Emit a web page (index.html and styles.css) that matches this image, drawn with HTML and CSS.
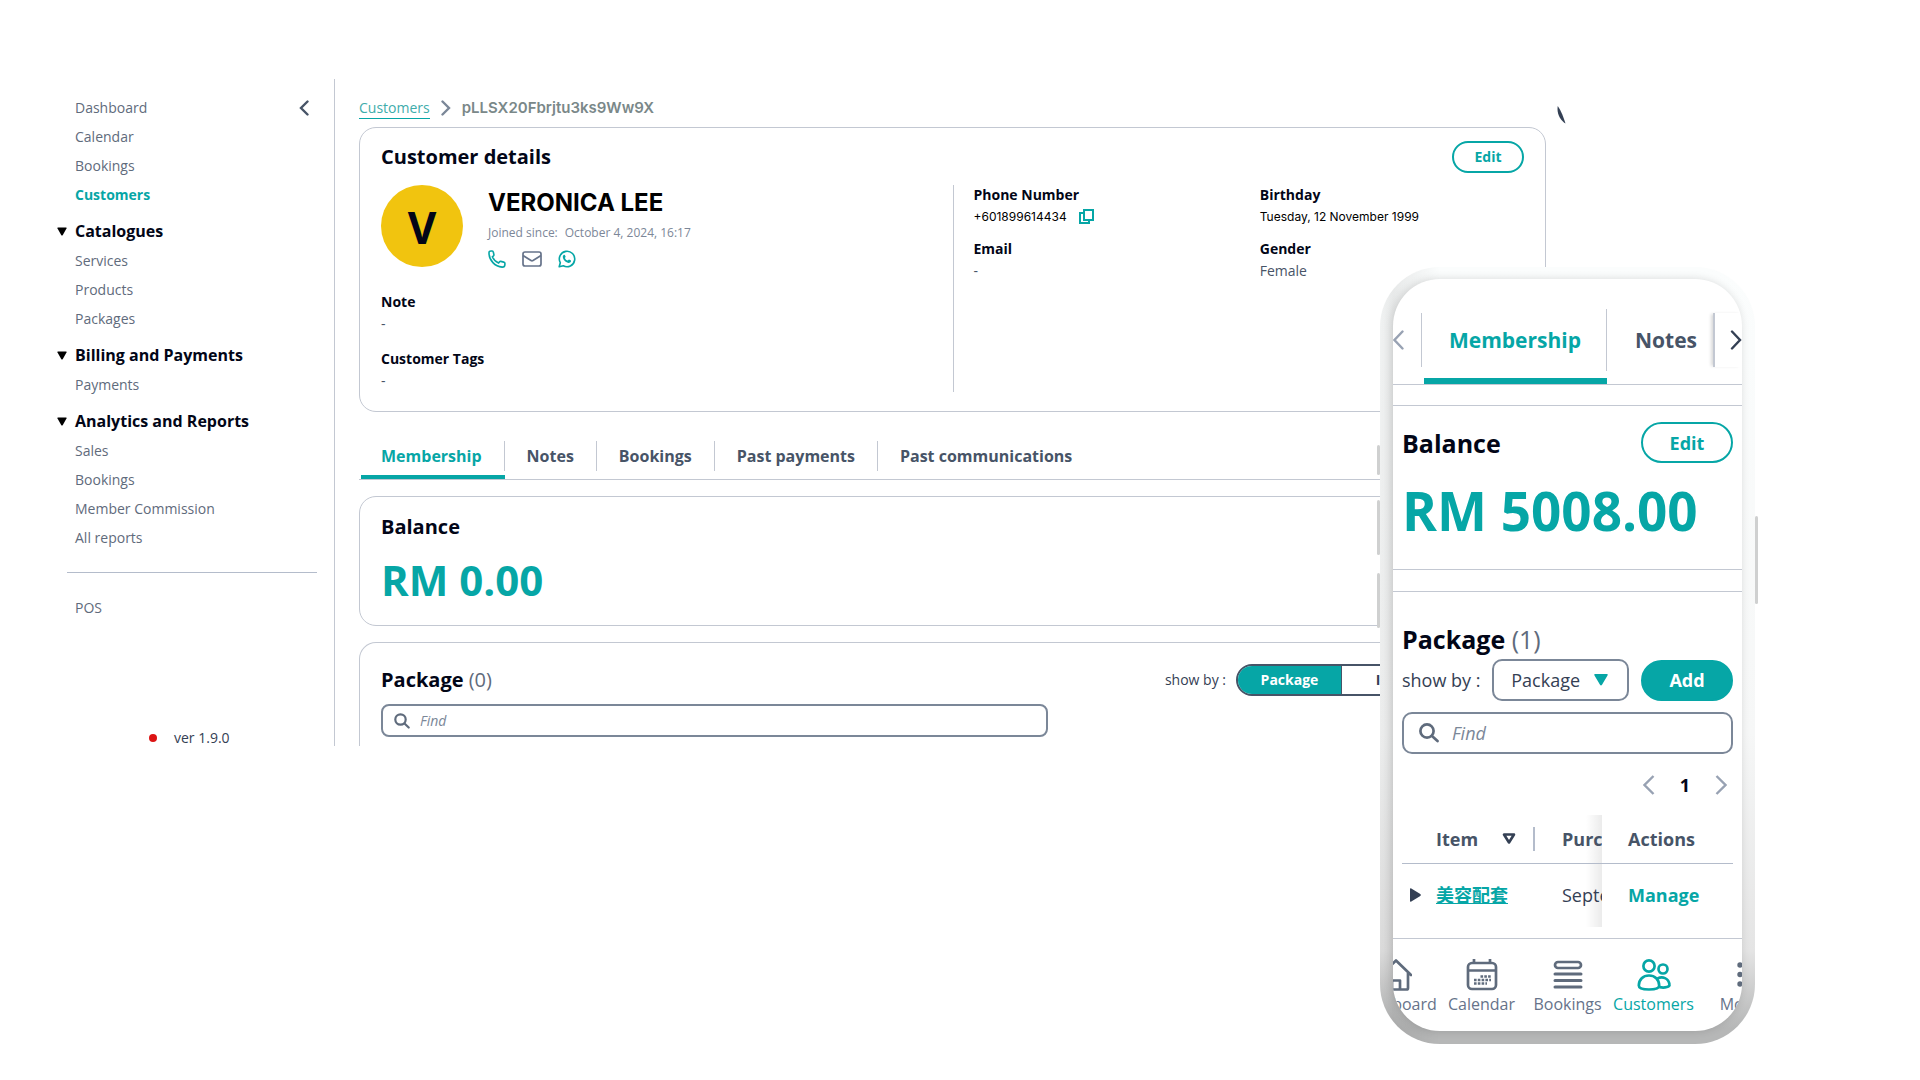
FILE: index.html
```html
<!DOCTYPE html>
<html lang="en">
<head>
<meta charset="utf-8">
<meta name="viewport" content="width=device-width, initial-scale=1">
<title>Customer details</title>
<link rel="stylesheet" href="styles.css">
</head>
<body>
<div class="stage">
  <div class="desktop">
    <aside class="sidebar">
      <nav class="menu" aria-label="Main">
        <div class="menu-top">
          <a href="#">Dashboard</a>
          <button class="icon-btn" type="button" aria-label="Collapse menu">
            <svg width="10" height="16" viewBox="0 0 10 16"><path d="M8.500 1.500 2 8l6.500 6.500" fill="none" stroke="#475467" stroke-width="2.400" stroke-linecap="round"/></svg>
          </button>
        </div>
        <a href="#">Calendar</a>
        <a href="#">Bookings</a>
        <a href="#" class="current">Customers</a>
        <button class="group" type="button"><svg width="10" height="9" viewBox="0 0 10 9"><path d="M1 .5h8q1 0 .5 1L5.800 8q-.8 1-1.600 0L.5 1.500Q0 .5 1 .5z"/></svg>Catalogues</button>
        <a href="#">Services</a>
        <a href="#">Products</a>
        <a href="#">Packages</a>
        <button class="group" type="button"><svg width="10" height="9" viewBox="0 0 10 9"><path d="M1 .5h8q1 0 .5 1L5.800 8q-.8 1-1.600 0L.5 1.500Q0 .5 1 .5z"/></svg>Billing and Payments</button>
        <a href="#">Payments</a>
        <button class="group" type="button"><svg width="10" height="9" viewBox="0 0 10 9"><path d="M1 .5h8q1 0 .5 1L5.800 8q-.8 1-1.600 0L.5 1.500Q0 .5 1 .5z"/></svg>Analytics and Reports</button>
        <a href="#">Sales</a>
        <a href="#">Bookings</a>
        <a href="#">Member Commission</a>
        <a href="#">All reports</a>
        <hr>
        <a href="#">POS</a>
      </nav>
      <p class="version"><span class="dot"></span>ver 1.9.0</p>
    </aside>

    <main class="main">
      <nav class="crumbs" aria-label="Breadcrumb">
        <a href="#">Customers</a>
        <svg width="10" height="16" viewBox="0 0 10 16"><path d="M1.500 1.500 8 8l-6.500 6.500" fill="none" stroke="#7b8798" stroke-width="2.400" stroke-linecap="round"/></svg>
        <span class="crumb-id">pLLSX20Fbrjtu3ks9Ww9X</span>
      </nav>

      <section class="card details">
        <header class="card-head">
          <h1 class="title">Customer details</h1>
          <button class="btn btn-outline" type="button">Edit</button>
        </header>
        <div class="details-grid">
          <div class="profile">
            <div class="person">
              <div class="avatar">V</div>
              <div class="person-text">
                <h2 class="name">VERONICA LEE</h2>
                <p class="joined"><span>Joined since:</span><span>October 4, 2024, 16:17</span></p>
                <div class="contacts">
                  <a href="#" aria-label="Call"><svg width="18" height="18" viewBox="0 0 18 18" fill="none" stroke="#06a6a6" stroke-width="1.600" stroke-linejoin="round"><path d="M1 2.800C1 1.600 1.800 1 3 1h1.200c.6 0 1 .4 1.100 1l.6 2.600c.1.500 0 .9-.4 1.200L4.300 6.800c1.200 2.700 3.500 5 6.300 6.300l1-1.300c.3-.4.8-.5 1.200-.4l3 .7c.7.100 1.100.6 1.100 1.200v1.100c0 1.700-1 2.700-2.700 2.700C7 16.500 1 10.500 1 2.800z"/></svg></a>
                  <a href="#" aria-label="Email"><svg width="20" height="16" viewBox="0 0 20 16" fill="none" stroke="#66738a" stroke-width="1.700"><rect x="1" y="1" width="18" height="14" rx="2"/><path d="m1 4.500 8 5q1 .6 2 0l8-5"/></svg></a>
                  <a href="#" aria-label="WhatsApp"><svg width="18" height="18" viewBox="0 0 18 18"><path d="M1.200 16.800 2.300 12.700A7.700 7.700 0 1 1 5.300 15.700z" fill="none" stroke="#06a6a6" stroke-width="1.600" stroke-linejoin="round"/><path d="M6.500 4.800c-.5-.2-1.700.7-1.700 2 0 3 3.500 6.300 6.200 6.100 1.300-.1 2.200-1.100 2-2.100-.1-.4-1.600-1.100-2-1.200-.5 0-.8 1.100-1.200 1C8.600 10.300 7.200 9 6.900 7.900c-.1-.4.8-.7.700-1.200 0-.3-.6-1.800-1.100-1.900z" fill="#06a6a6"/></svg></a>
                </div>
              </div>
            </div>
            <dl class="facts">
              <div><dt>Note</dt><dd>-</dd></div>
              <div><dt>Customer Tags</dt><dd>-</dd></div>
            </dl>
          </div>
          <dl class="info">
            <div><dt>Phone Number</dt><dd class="typed">+601899614434
              <button class="icon-btn" type="button" aria-label="Copy phone number"><svg width="15" height="15" viewBox="0 0 15 15" fill="none" stroke="#06a6a6" stroke-width="2"><path d="M5 1h9v10H5z"/><path d="M5 4H1v10h9v-3"/></svg></button></dd></div>
            <div><dt>Birthday</dt><dd class="typed">Tuesday, 12 November 1999</dd></div>
            <div><dt>Email</dt><dd>-</dd></div>
            <div><dt>Gender</dt><dd>Female</dd></div>
          </dl>
        </div>
      </section>

      <nav class="tabs" aria-label="Customer sections">
        <a href="#" class="active"><span>Membership</span></a>
        <a href="#"><span>Notes</span></a>
        <a href="#"><span>Bookings</span></a>
        <a href="#"><span>Past payments</span></a>
        <a href="#"><span>Past communications</span></a>
      </nav>

      <section class="card balance">
        <h2 class="title">Balance</h2>
        <p class="amount">RM 0.00</p>
      </section>

      <section class="card package">
        <div class="package-head">
          <h2 class="title">Package <span class="count">(0)</span></h2>
          <div class="show-by">
            <span>show by :</span>
            <div class="segmented">
              <button type="button" class="on">Package</button>
              <button type="button">Item</button>
            </div>
          </div>
        </div>
        <div class="search-row">
          <label class="search">
            <svg width="16" height="16" viewBox="0 0 16 16" fill="none" stroke="#5f6b7c" stroke-width="2.200" stroke-linecap="round"><circle cx="6.500" cy="6.500" r="5.200"/><path d="m10.500 10.500 4.200 4"/></svg>
            <input type="text" placeholder="Find" aria-label="Find a package">
          </label>
        </div>
      </section>
    </main>
    <svg class="sliver" width="9" height="18" viewBox="0 0 9 18"><path d="M.8 0C4 4.500 6.500 11 8.500 17.500 3.500 14-.6 8 .8 0z" fill="#344054"/></svg>
  </div>

  <div class="phone">
    <i class="key key-a"></i><i class="key key-b"></i><i class="key key-c"></i><i class="key key-d"></i>
    <div class="bezel">
      <div class="screen">
        <nav class="m-tabs" aria-label="Mobile sections">
          <button class="icon-btn m-prev" type="button" aria-label="Previous tab"><svg width="12" height="20" viewBox="1 0 12 20"><path d="M10.500 1.500 2.500 10l8 8.500" fill="none" stroke="#98a2b3" stroke-width="2.400" stroke-linecap="round"/></svg></button>
          <a href="#" class="active">Membership</a>
          <a href="#">Notes</a>
          <button class="icon-btn m-next" type="button" aria-label="Next tab"><svg width="12" height="20" viewBox="0 0 12 20"><path d="m2 1.500 8 8.500-8 8.500" fill="none" stroke="#344054" stroke-width="2.400" stroke-linecap="round"/></svg></button>
        </nav>

        <section class="m-balance">
          <div class="m-row">
            <h2 class="m-title">Balance</h2>
            <button class="m-btn m-outline" type="button">Edit</button>
          </div>
          <p class="m-amount">RM 5008.00</p>
        </section>

        <section class="m-package">
          <h2 class="m-title">Package <span class="count">(1)</span></h2>
          <div class="m-tools">
            <label for="show">show by :</label>
            <div class="select">
              <select id="show"><option>Package</option></select>
              <svg width="14" height="12" viewBox="0 0 14 12"><path d="M1.200 0h11.600q1.600 0 .7 1.400L8 10.800q-1 1.400-2 0L.5 1.400Q-.4 0 1.200 0z" fill="#06a6a6"/></svg>
            </div>
            <button class="m-btn m-solid" type="button">Add</button>
          </div>
          <label class="search m-search">
            <svg width="20" height="20" viewBox="0 0 20 20" fill="none" stroke="#5f6b7c" stroke-width="2.700" stroke-linecap="round"><circle cx="8" cy="8" r="6.600"/><path d="m13 13 5.500 5"/></svg>
            <input type="text" placeholder="Find" aria-label="Find a package on mobile">
          </label>
          <div class="pager">
            <button class="icon-btn" type="button" aria-label="Previous page"><svg width="12" height="20" viewBox="0 0 12 20"><path d="M10.500 1 1.500 10l9 9" fill="none" stroke="#98a2b3" stroke-width="2.400"/></svg></button>
            <span>1</span>
            <button class="icon-btn" type="button" aria-label="Next page"><svg width="12" height="20" viewBox="0 0 12 20"><path d="m1.500 1 9 9-9 9" fill="none" stroke="#98a2b3" stroke-width="2.400"/></svg></button>
          </div>
          <table>
            <thead>
              <tr>
                <th class="c-open"></th>
                <th class="c-item"><div>Item <svg width="14" height="12" viewBox="0 0 14 12"><path d="M2 1.500h10L7 9.500z" fill="none" stroke="#344054" stroke-width="2.600" stroke-linejoin="round"/></svg></div></th>
                <th class="c-date">Purchased</th>
                <th class="c-act">Actions</th>
              </tr>
            </thead>
            <tbody>
              <tr>
                <td class="c-open"><svg width="11" height="14" viewBox="0 0 11 14"><path d="M0 1.200Q0-.3 1.300.5l9 5.500q1 1 0 2l-9 5.500Q0 14.300 0 12.800z" fill="#344054"/></svg></td>
                <td class="c-item"><a href="#" class="zh" lang="zh">美容配套</a></td>
                <td class="c-date">September</td>
                <td class="c-act"><a href="#">Manage</a></td>
              </tr>
            </tbody>
          </table>
        </section>

        <nav class="m-nav" aria-label="Mobile menu">
          <a href="#"><svg width="32" height="32" viewBox="0 0 32 32" fill="none" stroke="#5f6b7c" stroke-width="2.700" stroke-linejoin="round" stroke-linecap="round"><path d="M1 16 16 1.500 31 16M4 14v15q0 1.500 1.500 1.500h21q1.500 0 1.500-1.500V14M12 30v-8.500h8V30"/></svg>Dashboard</a>
          <a href="#"><svg width="32" height="32" viewBox="0 0 32 32" fill="none" stroke="#5f6b7c" stroke-width="2.700"><rect x="2" y="4" width="28" height="26" rx="4"/><path d="M2 11.500h28M8 0v5M24 0v5"/><path d="M14.500 17.500h10.500M8 21h17M8 24.500h13" stroke-width="2.600" stroke-dasharray="2.600 1.200"/></svg>Calendar</a>
          <a href="#"><svg width="32" height="32" viewBox="0 0 32 32" fill="none" stroke="#5f6b7c" stroke-width="2.700" stroke-linecap="round"><rect x="3" y="3" width="26" height="6" rx="3"/><path d="M3 15h26M3 21.500h26M3 28h26" stroke-width="3"/></svg>Bookings</a>
          <a href="#" class="current"><svg width="34" height="32" viewBox="0 0 34 32" fill="none" stroke="#06a6a6" stroke-width="2.700" stroke-linejoin="round"><circle cx="12" cy="7" r="5.600"/><circle cx="26" cy="10" r="4.500"/><path d="M1.800 26.500C2 20.500 6 16.500 12 16.500s10 4 10.200 10c0 3-4 4-10.200 4s-10.200-1-10.200-4z"/><path d="M20.500 19.500c5-2.500 11-.5 12 6 .4 2.200-4 3.700-10 2.700"/></svg>Customers</a>
          <a href="#"><svg width="32" height="32" viewBox="0 0 32 32" fill="#5f6b7c"><circle cx="16" cy="6" r="2.700"/><circle cx="16" cy="15.500" r="2.700"/><circle cx="16" cy="25" r="2.700"/></svg>More</a>
        </nav>
      </div>
    </div>
  </div>
</div>
</body>
</html>
```
FILE: styles.css
```css
:root {
  --teal: #06a6a6;
  --ink: #020617;
  --slate: #475467;
  --muted: #5f6b7c;
  --line: #c3c8d2;
}

* { box-sizing: border-box; }

body {
  margin: 0;
  background: #fff;
  color: var(--ink);
  font: 14px/20px "Open Sans", "Noto Sans CJK SC", sans-serif;
}

h1, h2, p, dl, dd { margin: 0; }
a { color: inherit; text-decoration: none; }
button, input, select { font: inherit; color: inherit; }
svg { display: block; flex: none; }

.icon-btn {
  padding: 0;
  border: 0;
  background: none;
}

.stage {
  position: relative;
  min-height: 100vh;
  padding-top: 79px;
}

.desktop {
  display: flex;
  margin-right: 354px;
}

/* Sidebar */
.sidebar {
  display: flex;
  flex: none;
  flex-direction: column;
  width: 335px;
  padding: 14px 17px 0 0;
  border-right: 1px solid var(--line);
}

.menu {
  display: flex;
  flex-direction: column;
  padding-left: 75px;
  color: var(--muted);
  line-height: 29px;
}

.menu-top {
  display: flex;
  align-items: center;
  justify-content: space-between;
  padding-right: 8px;
}

.menu .current {
  color: var(--teal);
  font-weight: 700;
}

.group {
  display: flex;
  align-items: center;
  gap: 8px;
  margin: 8px 0 0 -18px;
  padding: 0;
  border: 0;
  background: none;
  color: var(--ink);
  font-size: 16px;
  font-weight: 700;
}

.menu hr {
  width: 250px;
  margin: 20px 0 20px -8px;
  border: 0;
  border-top: 1px solid #b4bccb;
}

.version {
  display: flex;
  align-items: center;
  gap: 17px;
  margin-top: auto;
  padding-left: 149px;
  color: #344054;
  line-height: 16px;
}

.dot {
  width: 8px;
  height: 8px;
  border-radius: 50%;
  background: #dc1414;
}

/* Main column */
.main {
  flex: 1;
  min-width: 0;
  padding-left: 24px;
}

.crumbs {
  display: flex;
  align-items: center;
  height: 48px;
  padding-top: 10px;
  gap: 11px;
}

.crumbs a {
  border-bottom: 1px solid var(--teal);
  color: #3eacab;
}

.crumb-id {
  color: #7a8889;
  font: 600 15px/20px Inter, sans-serif;
}

.card {
  padding: 0 21px;
  border: 1px solid var(--line);
  border-radius: 17px;
}

.title {
  font-size: 20px;
  font-weight: 700;
  line-height: 28px;
}

.count {
  color: var(--muted);
  font-weight: 400;
}

.details {
  padding-top: 13px;
  padding-bottom: 19px;
}

.card-head {
  display: flex;
  align-items: center;
  justify-content: space-between;
}

.btn {
  width: 72px;
  height: 32px;
  padding: 0;
  border-radius: 16px;
  font-weight: 700;
}

.btn-outline {
  border: 2px solid var(--teal);
  background: #fff;
  color: var(--teal);
}

.details-grid {
  display: grid;
  grid-template-columns: 1fr 1fr;
  margin-top: 12px;
}

.person {
  display: flex;
  gap: 25px;
}

.avatar {
  width: 82px;
  height: 82px;
  border-radius: 50%;
  background: #f1c40f;
  font-size: 44px;
  font-weight: 700;
  line-height: 84px;
  text-align: center;
}

.name {
  color: #000;
  font: 700 24px/36px Inter, sans-serif;
}

.joined {
  display: flex;
  gap: 7px;
  margin-top: 3px;
  color: #7c8798;
  font-size: 12px;
  line-height: 18px;
}

.contacts {
  display: flex;
  align-items: center;
  gap: 16px;
  margin-top: 8px;
}

dt { font-weight: 700; }
dd { color: var(--slate); }

.facts {
  display: grid;
  gap: 14px;
  margin-top: 24px;
}

.info {
  display: grid;
  grid-template-columns: 1fr 1fr;
  align-content: start;
  gap: 11px 22px;
  padding: 0 0 0 20px;
  border-left: 1px solid var(--line);
}

.info dd, .facts dd { line-height: 23px; }

.typed {
  display: flex;
  align-items: center;
  gap: 12px;
  color: #000;
  font-family: Inter, sans-serif;
  font-size: 12px;
}

/* Desktop tabs */
.tabs {
  display: flex;
  height: 51px;
  margin-top: 17px;
  border-bottom: 1px solid var(--line);
  color: var(--slate);
  font-size: 16px;
  font-weight: 700;
}

.tabs a {
  padding: 12px 0 8px;
}

.tabs span {
  display: block;
  padding: 0 22px;
  border-right: 1px solid var(--line);
  line-height: 30px;
}

.tabs a:last-child span { border-right: 0; }

.tabs .active {
  color: var(--teal);
  background: linear-gradient(var(--teal), var(--teal)) 2px 100% / 100% 4px no-repeat;
}

.balance {
  margin-top: 16px;
  padding-top: 16px;
  padding-bottom: 15px;
}

.amount {
  margin-top: 9px;
  color: var(--teal);
  font-size: 42px;
  font-weight: 700;
  line-height: 60px;
}

.package {
  margin-top: 16px;
  padding-top: 21px;
  padding-bottom: 9px;
  border-bottom: 0;
  border-radius: 17px 17px 0 0;
}

.package-head {
  display: flex;
  align-items: center;
  justify-content: space-between;
}

.show-by {
  display: flex;
  align-items: center;
  gap: 10px;
  margin-right: 80px;
  color: #344054;
}

.segmented {
  display: flex;
  overflow: hidden;
  border: 2px solid #475467;
  border-radius: 16px;
}

.segmented button {
  width: 100px;
  height: 28px;
  padding: 0;
  border: 0;
  background: #fff;
  font-weight: 700;
}

.segmented .on {
  width: 104px;
  border-right: 1px solid #475467;
  background: var(--teal);
  color: #fff;
}

.search-row {
  display: grid;
  grid-template-columns: 7fr 5fr;
  margin-top: 8px;
}

.search {
  display: flex;
  align-items: center;
  gap: 10px;
  height: 33px;
  padding: 0 11px;
  border: 2px solid #7b8798;
  border-radius: 8px;
}

.search input {
  flex: 1;
  min-width: 0;
  padding: 0;
  border: 0;
  outline: 0;
  background: none;
}

.search input::placeholder {
  color: #7b8798;
  font-style: italic;
  opacity: 1;
}

.sliver { margin: 27px 0 0 11px; }

/* Phone mock-up laid over the page */
.phone {
  position: absolute;
  top: 267px;
  right: 165px;
  width: 375px;
}

.bezel {
  overflow: hidden;
  padding: 12px 13px 13px;
  border-radius: 60px;
  background:
    linear-gradient(to right, rgba(0, 0, 0, .04), rgba(0, 0, 0, .08) 13px, rgba(0, 0, 0, 0) 60px),
    linear-gradient(#fbfdfd 0, #f6f7f7 60%, #e4e4e4 88%, #b6b7b7 98%);
}

.screen {
  display: flex;
  flex-direction: column;
  overflow: hidden;
  border-radius: 47px;
  background: #fff;
  box-shadow: -1px 0 8px rgba(0, 0, 0, .14);
}

.key {
  position: absolute;
  width: 3px;
  border-radius: 2px;
  background: #cfd0d0;
}

.key-a { top: 178px; left: -3px; height: 30px; }
.key-b { top: 233px; left: -3px; height: 55px; }
.key-c { top: 306px; left: -3px; height: 55px; }
.key-d { top: 249px; right: -3px; height: 88px; }

.m-tabs {
  display: flex;
  height: 106px;
  padding-top: 30px;
  border-bottom: 1px solid var(--line);
  color: var(--slate);
  font-size: 21px;
  font-weight: 700;
  line-height: 62px;
}

.m-tabs a {
  padding: 0 12px 0 28px;
}

.m-tabs .active {
  padding: 0 26px 0 27px;
  color: var(--teal);
  background:
    linear-gradient(var(--line), var(--line)) 100% 0 / 1px 62px no-repeat,
    linear-gradient(var(--teal), var(--teal)) 2px 100% / 100% 6px no-repeat;
}

.m-prev, .m-next {
  flex: none;
  width: 29px;
  height: 54px;
  margin-top: 4px;
}

.m-prev { border-right: 1px solid var(--line); }

.m-next {
  display: flex;
  align-items: center;
  justify-content: flex-end;
  margin-left: auto;
  border-left: 2px solid var(--line);
  box-shadow: -3px 0 3px -1px rgba(0, 0, 0, .15);
}

.m-balance {
  margin-top: 20px;
  padding: 16px 9px 20px;
  border: solid var(--line);
  border-width: 1px 0;
}

.m-row {
  display: flex;
  align-items: center;
  justify-content: space-between;
}

.m-title {
  font-size: 25px;
  font-weight: 700;
  line-height: 34px;
}

.m-btn {
  width: 92px;
  height: 41px;
  padding: 0;
  border: 2px solid var(--teal);
  border-radius: 21px;
  font-size: 18px;
  font-weight: 700;
}

.m-outline {
  background: #fff;
  color: var(--teal);
}

.m-solid {
  background: var(--teal);
  color: #fff;
}

.m-amount {
  margin-top: 10px;
  color: var(--teal);
  font-size: 53px;
  font-weight: 700;
  line-height: 76px;
  white-space: nowrap;
}

.m-package {
  margin-top: 21px;
  padding: 30px 9px 11px;
  border-top: 1px solid var(--line);
}

.m-tools {
  display: flex;
  align-items: center;
  justify-content: space-between;
  margin-top: 3px;
  color: #344054;
  font-size: 18px;
}

.select {
  display: grid;
  align-items: center;
  justify-items: end;
  width: 137px;
}

.select > * { grid-area: 1 / 1; }

.select select {
  width: 100%;
  height: 42px;
  padding: 0 17px;
  border: 2px solid #7b8798;
  border-radius: 10px;
  background: #fff;
  line-height: 28px;
  appearance: none;
}

.select svg {
  margin-right: 21px;
  pointer-events: none;
}

.m-search {
  gap: 13px;
  height: 42px;
  margin-top: 11px;
  padding: 0 15px;
  border-radius: 10px;
  font-size: 18px;
}

.pager {
  display: flex;
  align-items: center;
  justify-content: flex-end;
  gap: 25px;
  height: 61px;
  padding-right: 6px;
  font-size: 18px;
  font-weight: 700;
}

table {
  width: 100%;
  table-layout: fixed;
  border-collapse: collapse;
  font-size: 18px;
  text-align: left;
  white-space: nowrap;
}

th, td {
  height: 48px;
  padding: 0;
  overflow: hidden;
}

td {
  height: 64px;
  color: #344054;
}

th {
  border-bottom: 1px solid #b4bccb;
  color: var(--slate);
  font-weight: 700;
}

.c-open { width: 34px; padding-left: 8px; }
.c-item { width: 99px; }

.c-item div {
  display: flex;
  align-items: center;
  justify-content: space-between;
  height: 24px;
  padding-right: 17px;
  border-right: 2px solid #b4bccb;
}

.c-date {
  width: 67px;
  padding-left: 27px;
  background: linear-gradient(to left, rgba(0, 0, 0, .08), rgba(0, 0, 0, 0) 16px);
}

.c-act { padding-left: 26px; }

.c-act a {
  color: var(--teal);
  font-weight: 700;
}

.zh {
  color: var(--teal);
  font-weight: 700;
  text-decoration: underline;
}

.m-nav {
  display: flex;
  justify-content: center;
  height: 93px;
  padding-top: 20px;
  border-top: 1px solid var(--line);
  color: #66738a;
  font-size: 16px;
}

.m-nav a {
  display: flex;
  flex: none;
  flex-direction: column;
  align-items: center;
  gap: 3px;
  width: 86px;
}

.m-nav .current { color: var(--teal); }
```
